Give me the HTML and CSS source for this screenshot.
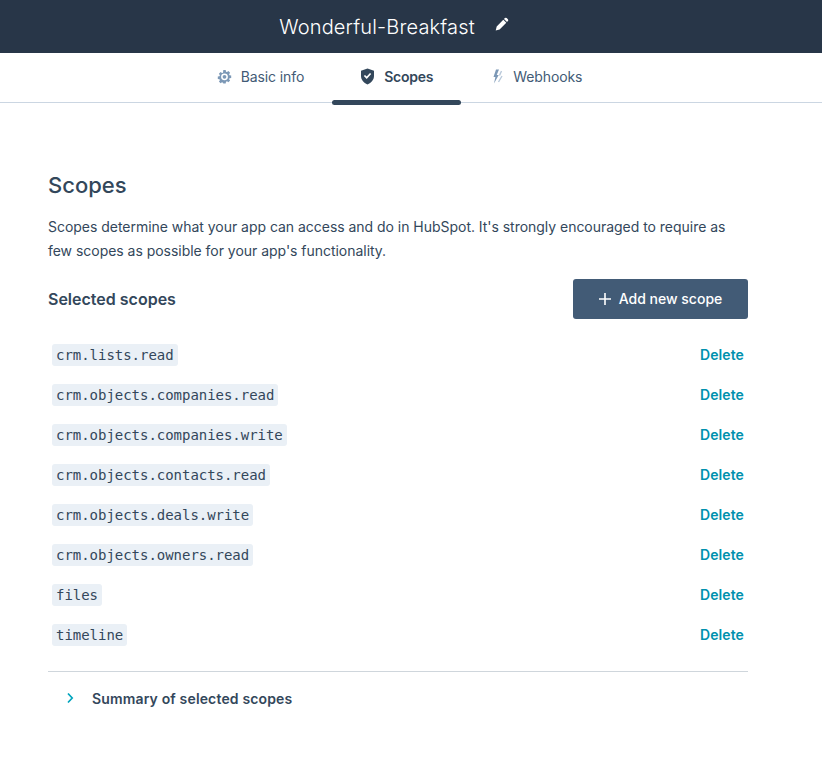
FILE: index.html
```html
<!DOCTYPE html>
<html lang="en">
<head>
<meta charset="utf-8">
<title>Scopes</title>
<link rel="stylesheet" href="styles.css">
</head>
<body>
<header class="topbar">
  <h1 class="app-name">Wonderful-Breakfast</h1>
  <svg class="pencil" viewBox="0 0 14 14" width="14" height="14"><path d="M9.900 1.100a1.300 1.300 0 0 1 1.800 0l1.200 1.200a1.300 1.300 0 0 1 0 1.800l-.9.9-3-3zM8.300 2.700l3 3-6.700 6.700-3.900 1 1-3.900z" fill="#fff"/></svg>
</header>
<nav class="tabs">
  <a class="tab">
    <svg class="tab-icon" viewBox="0 0 15 15" width="15" height="15"><path fill="#7c98b6" fill-rule="evenodd" d="M6.300 1h2.400l.3 1.700 1 .4 1.400-1 1.700 1.700-1 1.400.4 1 1.700.3v2.400l-1.700.3-.4 1 1 1.400-1.700 1.700-1.400-1-1 .4-.3 1.700H6.300L6 13.700l-1-.4-1.400 1-1.700-1.700 1-1.400-.4-1-1.700-.3V7.500l1.700-.3.4-1-1-1.400 1.700-1.700 1.400 1 1-.4zM7.500 4.400a3.400 3.400 0 1 0 0 6.800 3.400 3.400 0 0 0 0-6.800zm0 1.500a1.900 1.900 0 1 1 0 3.800 1.900 1.900 0 0 1 0-3.800z"/></svg>
    <span>Basic info</span>
  </a>
  <a class="tab tab-active">
    <svg class="tab-icon-shield" viewBox="0 0 15 17" width="15" height="17"><path fill="#33475b" fill-rule="evenodd" d="M7.500.5l6.500 2.200v5.400c0 3.700-2.700 6.800-6.500 8.400C3.700 14.900 1 11.800 1 8.100V2.700zM11.200 6L10 4.900 6.700 8.600 5 6.900 3.800 8.100l2.900 3z"/></svg>
    <span>Scopes</span>
  </a>
  <a class="tab">
    <svg class="tab-icon" viewBox="0 0 15 15" width="15" height="15"><path fill="#7c98b6" d="M7 .5h3L7.700 6h2L5 14.500 6.400 8H4.500z"/><path fill="none" stroke="#b9c9da" stroke-width="1.400" d="M12.500 2l-2 4.500M13 7l-3.500 6"/></svg>
    <span>Webhooks</span>
  </a>
</nav>
<main class="content">
  <h2 class="title">Scopes</h2>
  <p class="intro">Scopes determine what your app can access and do in HubSpot. It's strongly encouraged to require as few scopes as possible for your app's functionality.</p>
  <div class="section-head">
    <h3 class="section-title">Selected scopes</h3>
    <button class="add-btn"><svg viewBox="0 0 12 12" width="12" height="12"><path d="M6 0v12M0 6h12" stroke="#fff" stroke-width="1.600"/></svg><span class="add-label">Add new scope</span></button>
  </div>
  <ul class="scope-list">
    <li class="scope-row"><code class="scope">crm.lists.read</code><a class="delete">Delete</a></li>
    <li class="scope-row"><code class="scope">crm.objects.companies.read</code><a class="delete">Delete</a></li>
    <li class="scope-row"><code class="scope">crm.objects.companies.write</code><a class="delete">Delete</a></li>
    <li class="scope-row"><code class="scope">crm.objects.contacts.read</code><a class="delete">Delete</a></li>
    <li class="scope-row"><code class="scope">crm.objects.deals.write</code><a class="delete">Delete</a></li>
    <li class="scope-row"><code class="scope">crm.objects.owners.read</code><a class="delete">Delete</a></li>
    <li class="scope-row"><code class="scope">files</code><a class="delete">Delete</a></li>
    <li class="scope-row"><code class="scope">timeline</code><a class="delete">Delete</a></li>
  </ul>
  <div class="summary">
    <svg class="chev" viewBox="0 0 8 12" width="8" height="12"><path d="M2 1.500L6.200 6 2 10.500" fill="none" stroke="#00a4bd" stroke-width="1.700"/></svg>
    <span>Summary of selected scopes</span>
  </div>
</main>
</body>
</html>
```
FILE: styles.css
```css
* { box-sizing: border-box; }
html, body { margin: 0; padding: 0; }
body { background: #fff; color: #33475b; font-family: "Inter", "Liberation Sans", sans-serif; font-size: 14px; height: 774px; overflow: hidden; }
.topbar { height: 53px; background: #283648; display: flex; align-items: center; justify-content: center; gap: 20px; padding-right: 34px; }
.app-name { margin: 0; font-size: 20px; font-weight: 300; letter-spacing: .16px; color: #fff; }
.pencil { margin-top: -5px; }
.tabs { height: 50px; border-bottom: 1px solid #cbd6e2; display: flex; justify-content: center; padding-right: 23px; }
.tab { position: relative; display: flex; align-items: center; gap: 9px; padding: 0 28px 2px; color: #425b76; font-size: 14px; font-weight: 400; letter-spacing: -.1px; }
.tab-active { font-weight: 600; color: #33475b; letter-spacing: -.25px; }
.tab-active::after { content: ""; position: absolute; left: 0; right: 0; bottom: -3px; height: 5px; background: #33475b; border-radius: 3px; }
.content { padding: 0 74px 0 48px; }
.title { margin: 70px 0 0; font-size: 22px; line-height: 24px; font-weight: 500; }
.intro { margin: 18px 0 0; font-size: 14px; line-height: 24px; font-weight: 400; letter-spacing: -.03px; }
.section-head { margin-top: 16px; display: flex; justify-content: space-between; align-items: center; }
.section-title { margin: 0; font-size: 16px; font-weight: 600; }
.add-btn { width: 175px; height: 40px; border: 0; border-radius: 3px; background: #425b76; color: #fff; font: 500 14px "Inter", "Liberation Sans", sans-serif; display: flex; align-items: center; justify-content: center; gap: 8px; }
.add-label { margin-top: -2px; }
.scope-list { list-style: none; margin: 16px 0 0; padding: 0 4px 16px; border-bottom: 1px solid #cfd6dc; }
.scope-row { height: 40px; display: flex; justify-content: space-between; align-items: center; }
.scope { background: #eaf0f6; border-radius: 3px; padding: 0 4px; height: 22px; line-height: 22px; font-family: "DejaVu Sans Mono", monospace; font-size: 14px; letter-spacing: -.03px; color: #33475b; }
.delete { color: #0091ae; font-weight: 600; font-size: 14px; letter-spacing: .1px; padding-bottom: 2px; }
.summary { display: flex; align-items: center; height: 54px; padding: 0 0 2px 18px; font-weight: 600; font-size: 14px; letter-spacing: .15px; }
.chev { margin-right: 18px; }
```
